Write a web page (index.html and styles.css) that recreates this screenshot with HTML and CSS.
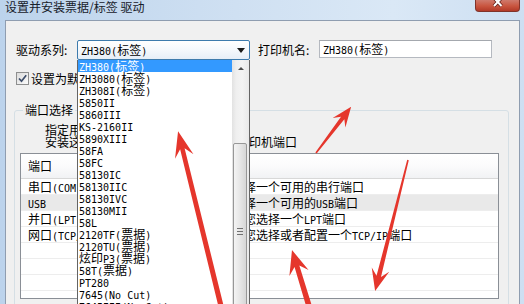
FILE: index.html
```html
<!DOCTYPE html>
<html lang="zh-CN">
<head>
<meta charset="utf-8">
<title>设置并安装票据/标签 驱动</title>
<link rel="stylesheet" href="styles.css">
</head>
<body>
<div class="window">
  <div class="titlebar">
    <span class="title">设置并安装票据/标签 驱动</span>
    <div class="close">
      <svg width="12" height="9" viewBox="0 0 12 9"><path d="M2 -2 L9.5 6 M9.5 -2 L2 6" stroke="#5a1a14" stroke-width="3.4"/><path d="M2 -2 L9.5 6 M9.5 -2 L2 6" stroke="#fff" stroke-width="2"/></svg>
    </div>
  </div>

  <div class="dialog">
    <div class="row1">
      <span class="lbl">驱动系列:</span>
      <div class="combo"><span class="combo-text"><span class="a">ZH380(</span>标签<span class="a">)</span></span><span class="caret"></span></div>
      <span class="lbl lbl2">打印机名:</span>
      <div class="input"><span class="a">ZH380(</span>标签<span class="a">)</span></div>
    </div>

    <div class="check-row">
      <span class="checkbox"><svg width="11" height="11" viewBox="0 0 11 11"><path d="M2 5.5 L4.5 8.2 L9.2 2.3" fill="none" stroke="#3d4d6a" stroke-width="1.7"/></svg></span>
      <span class="check-label">设置为默认打印机</span>
    </div>

    <fieldset class="group">
      <legend>端口选择</legend>
      <p class="desc">指定用于此打印机的端口。<br>安装这个驱动程序时需要您所选择的打印机端口</p>
      <div class="listview">
        <div class="lv-head"><span class="c1">端口</span><span class="c2">描述</span></div>
        <div class="lv-row"><span class="c1">串口<span class="a">(COM)</span></span><span class="c2">请您选择一个可用的串行端口</span></div>
        <div class="lv-row sel"><span class="c1"><span class="a">USB</span></span><span class="c2">请您选择一个可用的<span class="a">USB</span>端口</span></div>
        <div class="lv-row"><span class="c1">并口<span class="a">(LPT)</span></span><span class="c2">让我帮您选择一个<span class="a">LPT</span>端口</span></div>
        <div class="lv-row"><span class="c1">网口<span class="a">(TCP/IP)</span></span><span class="c2">让我帮您选择或者配置一个<span class="a">TCP/IP</span>端口</span></div>
        <div class="lv-row"></div>
        <div class="lv-row"></div>
        <div class="lv-row"></div>
        <div class="lv-row"></div>
      </div>
    </fieldset>
  </div>

  <div class="dropdown">
    <ul class="dd-list">
      <li class="on"><span class="a">ZH380(</span>标签<span class="a">)</span></li>
      <li><span class="a">ZH3080(</span>标签<span class="a">)</span></li>
      <li><span class="a">ZH308I(</span>标签<span class="a">)</span></li>
      <li><span class="a">5850II</span></li>
      <li><span class="a">5860III</span></li>
      <li><span class="a">KS-2160II</span></li>
      <li><span class="a">5890XIII</span></li>
      <li><span class="a">58FA</span></li>
      <li><span class="a">58FC</span></li>
      <li><span class="a">58130IC</span></li>
      <li><span class="a">58130IIC</span></li>
      <li><span class="a">58130IVC</span></li>
      <li><span class="a">58130MII</span></li>
      <li><span class="a">58L</span></li>
      <li><span class="a">2120TF(</span>票据<span class="a">)</span></li>
      <li><span class="a">2120TU(</span>票据<span class="a">)</span></li>
      <li>炫印<span class="a">P3(</span>票据<span class="a">)</span></li>
      <li><span class="a">58T(</span>票据<span class="a">)</span></li>
      <li><span class="a">PT280</span></li>
      <li><span class="a">7645(No Cut)</span></li>
      <li><span class="a">7645III(No Cut)</span></li>
    </ul>
    <div class="dd-scroll">
      <div class="sb-up"><span class="tri-up"></span></div>
      <div class="sb-thumb"><span class="grip"></span></div>
    </div>
  </div>

  <svg class="arrows" width="524" height="304" viewBox="0 0 524 304">
    <g fill="#e5362c">
      <polygon transform="translate(221 306) rotate(-103.8)" points="0,-2.6 162,-2.3 154,-9.5 180,0 154,9.5 162,2.3 0,2.6"/>
      <polygon transform="translate(316 153) rotate(-52.7)" points="0,-0.8 44,-2.1 38,-8 58,0 38,8 44,2.1 0,0.8"/>
      <polygon transform="translate(408 160) rotate(104.1)" points="0,-0.8 120,-2.3 113,-9 135,0 113,9 120,2.3 0,0.8"/>
      <polygon transform="translate(309 306) rotate(-106.9)" points="0,-2.8 41.5,-2.5 34.5,-10 58.5,0 34.5,10 41.5,2.5 0,2.8"/>
    </g>
  </svg>
</div>
</body>
</html>
```

FILE: styles.css
```css
* { box-sizing: border-box; }

body {
  margin: 0;
  width: 524px;
  height: 304px;
  overflow: hidden;
  font-family: "Noto Sans CJK SC", "Noto Sans", sans-serif;
  font-size: 12px;
  color: #000;
}

.a {
  font-family: "DejaVu Sans Mono", "Liberation Mono", monospace;
  font-size: 10px;
  line-height: 1;
}

.window {
  position: relative;
  width: 524px;
  height: 304px;
  overflow: hidden;
  background: linear-gradient(to right, #bcd3ec 0%, #cfe0f2 45%, #dae8f6 75%, #cddff2 100%);
}

/* title bar */
.titlebar {
  height: 20px;
  display: flex;
  justify-content: space-between;
  align-items: flex-start;
  padding: 0 4px 0 5px;
}

.title {
  line-height: 13px;
  color: #17202a;
  white-space: nowrap;
}

.close {
  width: 45px;
  height: 12px;
  border: 1px solid #80332a;
  border-top: none;
  border-radius: 0 0 4px 4px;
  background: linear-gradient(#cf7a6c 0%, #c9553f 55%, #b23a28 100%);
  display: flex;
  justify-content: center;
  align-items: flex-start;
}

/* dialog body */
.dialog {
  margin-left: 5px;
  width: 515px;
  height: 284px;
  background: #f0f0f0;
  border: 1px solid #8f9db0;
  border-bottom: none;
  padding-top: 19px;
}

.row1 {
  display: flex;
  align-items: flex-start;
  padding-left: 10px;
  height: 20px;
}

.lbl {
  width: 61px;
  line-height: 20px;
  white-space: nowrap;
}

.lbl2 { margin-left: 8px; }

.combo {
  width: 173px;
  height: 20px;
  border: 1px solid #3d7bad;
  border-radius: 2px;
  background: linear-gradient(#ffffff 0%, #f4f8fc 50%, #e6eef7 100%);
  display: flex;
  align-items: center;
  justify-content: space-between;
  padding: 0 4px 0 3px;
}

.combo-text {
  line-height: 18px;
  white-space: nowrap;
}

.caret {
  width: 0;
  height: 0;
  border-left: 4px solid transparent;
  border-right: 4px solid transparent;
  border-top: 5px solid #1a1a1a;
}

.input {
  width: 173px;
  height: 18px;
  border: 1px solid #b5b9c0;
  border-top-color: #a4a8ae;
  background: #fff;
  padding-left: 3px;
  line-height: 16px;
  white-space: nowrap;
}

.check-row {
  display: flex;
  align-items: center;
  margin: 12px 0 0 10px;
  height: 13px;
}

.checkbox {
  width: 13px;
  height: 13px;
  border: 1px solid #8e8f8f;
  background: linear-gradient(135deg, #dcdcdc, #fbfbfb);
  display: flex;
  align-items: center;
  justify-content: center;
}

.check-label {
  margin-left: 2px;
  line-height: 13px;
  white-space: nowrap;
}

/* group box */
.group {
  margin: 19px 10px 0 8px;
  padding: 0 8px 0 5px;
  border: 1px solid #d5dfe5;
  border-radius: 3px;
  height: 210px;
  min-width: 0;
}

.group legend {
  margin-left: 3px;
  padding: 0 2px;
  line-height: 12px;
}

.desc {
  margin: 8px 0 0 25px;
  line-height: 12px;
  white-space: nowrap;
}

.listview {
  margin-top: 5px;
  width: 479px;
  height: 146px;
  border: 1px solid #8a8f96;
  background: #fff;
  overflow: hidden;
}

.lv-head {
  display: flex;
  height: 25px;
  padding-top: 3px;
  border-bottom: 1px solid #d8d8d8;
  background: linear-gradient(#ffffff 0%, #fbfbfc 50%, #f1f2f4 100%);
  line-height: 18px;
}

.lv-row {
  display: flex;
  height: 16px;
  border-bottom: 1px solid #ededed;
  line-height: 15px;
  white-space: nowrap;
}

.lv-row.sel { background: #e9e9e9; }

.c1 {
  width: 187px;
  padding-left: 7px;
  flex: none;
}

.c2 { flex: 1; }

/* dropdown list of the combobox */
.dropdown {
  position: absolute;
  left: 77px;
  top: 60px;
  width: 173px;
  height: 260px;
  border: 1px solid #646464;
  border-top: none;
  background: #fff;
  display: flex;
}

.dd-list {
  list-style: none;
  margin: 0;
  padding: 0;
  width: 154px;
}

.dd-list li {
  height: 12px;
  line-height: 12px;
  padding-left: 1px;
  white-space: nowrap;
}

.dd-list li.on {
  background: #3399ff;
  color: #fff;
}

.dd-scroll {
  width: 17px;
  background: linear-gradient(to right, #e2e2e2 0%, #efefef 25%, #f3f3f3 60%, #e9e9e9 100%);
  display: flex;
  flex-direction: column;
}

.sb-up {
  height: 17px;
  display: flex;
  align-items: center;
  justify-content: center;
}

.tri-up {
  width: 0;
  height: 0;
  border-left: 3px solid transparent;
  border-right: 3px solid transparent;
  border-bottom: 3px solid #4d4d4d;
}

.sb-thumb {
  margin: 66px 0 0 1px;
  width: 14px;
  height: 176px;
  border: 1px solid #979797;
  border-radius: 2px;
  background: linear-gradient(to right, #f4f4f4 0%, #e6e6e6 50%, #d6d6d6 100%);
  display: flex;
  align-items: center;
  justify-content: center;
}

.grip {
  width: 6px;
  height: 7px;
  background: repeating-linear-gradient(#707070 0 1px, transparent 1px 3px);
}

.arrows {
  position: absolute;
  left: 0;
  top: 0;
  pointer-events: none;
}
```
